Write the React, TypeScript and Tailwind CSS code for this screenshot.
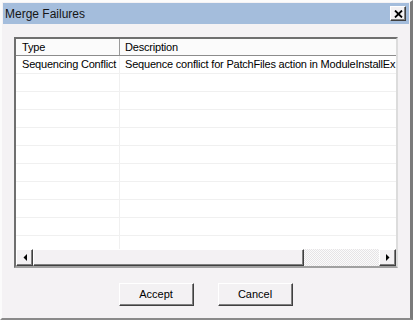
import React from 'react';

type Failure = {
  type: string;
  description: string;
};

const failures: Failure[] = [
  {
    type: 'Sequencing Conflict',
    description: 'Sequence conflict for PatchFiles action in ModuleInstallEx',
  },
];

const EMPTY_ROWS = 10;

const raised =
  'border border-t-white border-l-white border-r-[#404040] border-b-[#404040] shadow-[inset_-1px_-1px_0_#808080]';

const ArrowButton = ({ dir }: { dir: 'left' | 'right' }) => (
  <div className={`w-[17px] h-[17px] shrink-0 bg-[#f3f1f3] flex items-center justify-center ${raised}`}>
    <svg width="4" height="7" viewBox="0 0 4 7">
      {dir === 'left' ? (
        <polygon points="4,0 4,7 0.5,3.5" fill="#000" />
      ) : (
        <polygon points="0,0 0,7 3.5,3.5" fill="#000" />
      )}
    </svg>
  </div>
);

const DialogButton = ({ label }: { label: string }) => (
  <button className={`w-[75px] h-[23px] bg-[#f3f1f3] text-[11px] text-black ${raised}`}>
    {label}
  </button>
);

const App: React.FC = () => {
  return (
    <div
      className="w-[413px] h-[320px] bg-[#f4f2f4] border-t-2 border-l-2 border-t-[#fbfbfb] border-l-[#fbfbfb] border-r-[3px] border-b-2 border-r-[#7a7a7a] border-b-[#8a8a8a] flex flex-col overflow-hidden"
      style={{ fontFamily: '"Liberation Sans", Arial, sans-serif' }}
    >
      {/* title bar */}
      <div className="h-[21px] mt-px mx-px bg-[#a4bddc] flex items-center justify-between pl-[2px] pr-[3px]">
        <span className="text-[12px] text-[#151515]">Merge Failures</span>
        <div className={`w-[16px] h-[15px] bg-[#f3f1f3] flex items-center justify-center ${raised}`}>
          <svg width="9" height="8" viewBox="0 0 9 8">
            <path d="M1 0.5 L8 7.5 M8 0.5 L1 7.5" stroke="#000" strokeWidth="1.8" />
          </svg>
        </div>
      </div>

      {/* list */}
      <div className="mt-[13px] ml-[12px] w-[384px] h-[231px] border-2 border-t-[#6f6f6f] border-l-[#6f6f6f] border-r-[#dcdcdc] border-b-[#a0a0a0] bg-white flex flex-col">
        <div className="flex-1 overflow-hidden text-[11px] tracking-[-0.2px] text-black">
          <div className="flex h-[17px] border-b border-[#8c8c8c] bg-[#fbfbfb]">
            <div className="w-[104px] shrink-0 pl-[6px] leading-[16px] border-r border-[#9a9a9a]">Type</div>
            <div className="flex-1 pl-[5px] leading-[16px] whitespace-nowrap">Description</div>
          </div>
          {failures.map((f) => (
            <div key={f.type} className="flex h-[18px] border-b border-[#f0f0f0]">
              <div className="w-[104px] shrink-0 pl-[6px] leading-[17px] whitespace-nowrap overflow-hidden border-r border-[#f0f0f0]">
                {f.type}
              </div>
              <div className="flex-1 pl-[5px] leading-[17px] whitespace-nowrap">{f.description}</div>
            </div>
          ))}
          {Array.from({ length: EMPTY_ROWS }).map((_, i) => (
            <div key={i} className="flex h-[18px] border-b border-[#f0f0f0]">
              <div className="w-[104px] shrink-0 border-r border-[#f0f0f0]" />
              <div className="flex-1" />
            </div>
          ))}
        </div>

        {/* horizontal scrollbar */}
        <div className="h-[17px] flex bg-[repeating-conic-gradient(#e6e4e6_0%_25%,#fbfbfb_0%_50%)] bg-[length:2px_2px]">
          <ArrowButton dir="left" />
          <div className={`w-[271px] h-[17px] bg-[#f3f1f3] ${raised}`} />
          <div className="flex-1" />
          <ArrowButton dir="right" />
        </div>
      </div>

      {/* buttons */}
      <div className="mt-[15px] flex justify-center gap-[24px] pr-[1px]">
        <DialogButton label="Accept" />
        <DialogButton label="Cancel" />
      </div>
    </div>
  );
};

export default App;
